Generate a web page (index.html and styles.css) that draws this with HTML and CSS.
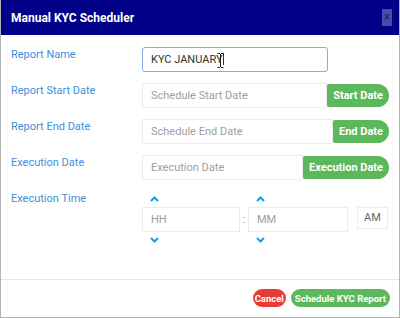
FILE: index.html
```html
<!DOCTYPE html>
<html lang="en">
<head>
    <meta charset="UTF-8">
    <title>Manual KYC Scheduler</title>
    <link rel="stylesheet" href="styles.css">
</head>
<body>
    <div class="dialog">
        <div class="dialog-header">
            <span class="dialog-title">Manual KYC Scheduler</span>
            <span class="close-btn">&times;</span>
        </div>

        <div class="dialog-body">
            <div class="form-row">
                <label class="form-label">Report Name</label>
                <div class="name-wrap">
                    <div class="text-input focused">KYC JANUARY<span class="caret"></span></div>
                    <!-- mouse pointer sitting over the field -->
                    <svg class="ibeam" width="7" height="15" viewBox="0 0 7 15">
                        <path d="M0.5 0.5h2.5M4 0.5h2.5M3.5 1v13M0.5 14.5h2.5M4 14.5h2.5" stroke="#222" stroke-width="1" fill="none"/>
                    </svg>
                </div>
            </div>

            <div class="form-row">
                <label class="form-label">Report Start Date</label>
                <div class="input-group">
                    <div class="text-input placeholder">Schedule Start Date</div>
                    <span class="addon-btn">Start Date</span>
                </div>
            </div>

            <div class="form-row">
                <label class="form-label">Report End Date</label>
                <div class="input-group">
                    <div class="text-input placeholder">Schedule End Date</div>
                    <span class="addon-btn">End Date</span>
                </div>
            </div>

            <div class="form-row">
                <label class="form-label">Execution Date</label>
                <div class="input-group">
                    <div class="text-input placeholder">Execution Date</div>
                    <span class="addon-btn">Execution Date</span>
                </div>
            </div>

            <div class="form-row">
                <label class="form-label">Execution Time</label>
                <div class="time-picker">
                    <div class="time-col hours">
                        <span class="chevron"><svg width="9" height="6" viewBox="0 0 9 6"><path d="M1 5L4.5 1.5L8 5" stroke="#1a9be0" stroke-width="2" fill="none"/></svg></span>
                        <div class="time-box placeholder">HH</div>
                        <span class="chevron"><svg width="9" height="6" viewBox="0 0 9 6"><path d="M1 1L4.5 4.5L8 1" stroke="#1a9be0" stroke-width="2" fill="none"/></svg></span>
                    </div>
                    <span class="time-sep">:</span>
                    <div class="time-col minutes">
                        <span class="chevron"><svg width="9" height="6" viewBox="0 0 9 6"><path d="M1 5L4.5 1.5L8 5" stroke="#1a9be0" stroke-width="2" fill="none"/></svg></span>
                        <div class="time-box placeholder">MM</div>
                        <span class="chevron"><svg width="9" height="6" viewBox="0 0 9 6"><path d="M1 1L4.5 4.5L8 1" stroke="#1a9be0" stroke-width="2" fill="none"/></svg></span>
                    </div>
                    <div class="meridian">AM</div>
                </div>
            </div>
        </div>

        <div class="dialog-footer">
            <button class="btn btn-cancel">Cancel</button>
            <button class="btn btn-submit">Schedule KYC Report</button>
        </div>
    </div>
</body>
</html>
```

FILE: styles.css
```css
body {
    margin: 0;
    font-family: Roboto, "Liberation Sans", sans-serif;
    background: #fff;
}
.dialog {
    width: 400px;
    height: 318px;
    box-sizing: border-box;
    border: 1px solid #b4b4b4;
    border-top: none;
    display: flex;
    flex-direction: column;
}
.dialog-header {
    height: 35px;
    background-color: #000088;
    padding: 0 7px 0 10px;
    display: flex;
    align-items: center;
    justify-content: space-between;
}
.dialog-title {
    color: #fff;
    font-size: 12px;
    font-weight: bold;
}
.close-btn {
    width: 10px;
    height: 17px;
    background-color: #4a4aa8;
    color: #202070;
    font-size: 12px;
    line-height: 17px;
    text-align: center;
}
.dialog-body {
    flex: 1;
    padding: 12px 0 0 10px;
}
.form-row {
    display: flex;
    margin-bottom: 11px;
}
.form-label {
    width: 131px;
    flex-shrink: 0;
    font-size: 11px;
    line-height: 16px;
    color: #3f8fd8;
}
.name-wrap {
    position: relative;
}
.text-input {
    height: 25px;
    box-sizing: border-box;
    border: 1px solid #ececec;
    padding: 0 8px;
    font-size: 11px;
    line-height: 23px;
    color: #333;
    white-space: nowrap;
}
.text-input.focused {
    width: 186px;
    border-color: #82aee0;
    border-radius: 3px;
}
.caret {
    display: inline-block;
    width: 1px;
    height: 12px;
    background: #333;
    vertical-align: -2px;
}
.ibeam {
    position: absolute;
    left: 75px;
    top: 6px;
}
.placeholder {
    color: #9e9e9e;
}
.input-group {
    width: 247px;
    display: flex;
    align-items: center;
}
.input-group .text-input {
    flex: 1;
}
.addon-btn {
    height: 23px;
    line-height: 23px;
    padding: 0 6px;
    background-color: #5cb85c;
    color: #fff;
    font-size: 11px;
    font-weight: bold;
    border-radius: 2px 12px 12px 2px;
    white-space: nowrap;
}
.time-picker {
    display: flex;
    align-items: center;
}
.time-col {
    display: flex;
    flex-direction: column;
}
.hours {
    width: 98px;
}
.minutes {
    width: 100px;
}
.chevron {
    height: 16px;
    display: flex;
    align-items: center;
    padding-left: 8px;
}
.time-box {
    height: 25px;
    box-sizing: border-box;
    border: 1px solid #ececec;
    padding: 0 8px;
    font-size: 11px;
    line-height: 23px;
}
.time-sep {
    width: 8px;
    text-align: center;
    font-size: 11px;
    color: #999;
}
.meridian {
    margin-left: 9px;
    width: 31px;
    height: 22px;
    box-sizing: border-box;
    border: 1px solid #ececec;
    font-size: 11px;
    line-height: 20px;
    text-align: center;
    color: #666;
    margin-bottom: 3px;
}
.dialog-footer {
    height: 38px;
    border-top: 1px solid #e6e6e6;
    display: flex;
    justify-content: flex-end;
    align-items: flex-start;
    padding: 9px 9px 0 0;
    box-sizing: border-box;
    gap: 5px;
}
.btn {
    border: none;
    color: #fff;
    font-family: Roboto, "Liberation Sans", sans-serif;
    font-size: 9.5px;
    font-weight: bold;
    height: 18px;
    padding: 0 4px;
    border-radius: 9px;
}
.btn-cancel {
    padding: 0 2px;
    background-color: #ea3b34;
}
.btn-submit {
    background-color: #5cb85c;
}
```
